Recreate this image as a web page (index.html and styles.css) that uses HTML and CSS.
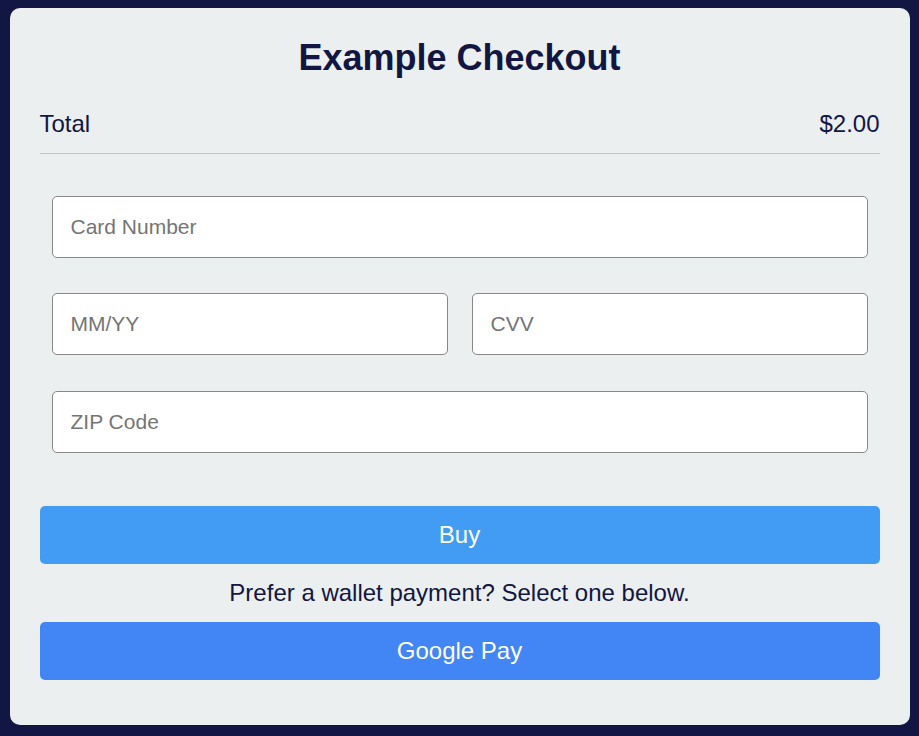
FILE: index.html
```html
<!DOCTYPE html>
<html>
<head>
<meta charset="utf-8">
<link rel="stylesheet" href="styles.css">
</head>
<body>
<main class="card">
  <h1 class="title">Example Checkout</h1>
  <div class="total">
    <span>Total</span>
    <span>$2.00</span>
  </div>
  <form class="form">
    <input class="field" type="text" placeholder="Card Number">
    <div class="row">
      <input class="field" type="text" placeholder="MM/YY">
      <input class="field" type="text" placeholder="CVV">
    </div>
    <input class="field field-zip" type="text" placeholder="ZIP Code">
  </form>
  <button class="btn btn-buy" type="button">Buy</button>
  <p class="wallet">Prefer a wallet payment? Select one below.</p>
  <button class="btn btn-gpay" type="button">Google Pay</button>
</main>
</body>
</html>
```

FILE: styles.css
```css
* { box-sizing: border-box; }
html, body { margin: 0; padding: 0; }
body {
  background: #111642;
  font-family: "Liberation Sans", Arial, sans-serif;
  color: #111642;
  padding-top: 8px;
}
.card {
  width: 900px;
  margin: 0 auto;
  background: #ebeff0;
  border-radius: 10px;
  padding: 20px 30px 45px;
}
.title {
  margin: 0;
  text-align: center;
  font-size: 36px;
  font-weight: bold;
  line-height: 60px;
}
.total {
  display: flex;
  justify-content: space-between;
  font-size: 24px;
  line-height: 28px;
  padding: 22px 0 15px;
  border-bottom: 1px solid #c3c6c8;
}
.form {
  display: flex;
  flex-direction: column;
  gap: 35px;
  padding: 42px 12px 53px;
}
.row {
  display: flex;
  gap: 24px;
}
.row .field { flex: 1; min-width: 0; }
.field {
  height: 62px;
  width: 100%;
  border: 1px solid #888;
  border-radius: 5px;
  background: #fff;
  padding: 0 18px;
  font-family: "Liberation Sans", Arial, sans-serif;
  font-size: 21px;
  color: #333;
  outline: none;
}
.field-zip { margin-top: 1px; }
.field::placeholder { color: #757575; }
.btn {
  display: block;
  width: 100%;
  height: 58px;
  border: 0;
  border-radius: 5px;
  color: #fff;
  font-family: "Liberation Sans", Arial, sans-serif;
  font-size: 24px;
}
.btn-buy { background: #429cf4; }
.btn-gpay { background: #4285f4; }
.wallet {
  margin: 0;
  text-align: center;
  font-size: 24px;
  line-height: 58px;
}
```
